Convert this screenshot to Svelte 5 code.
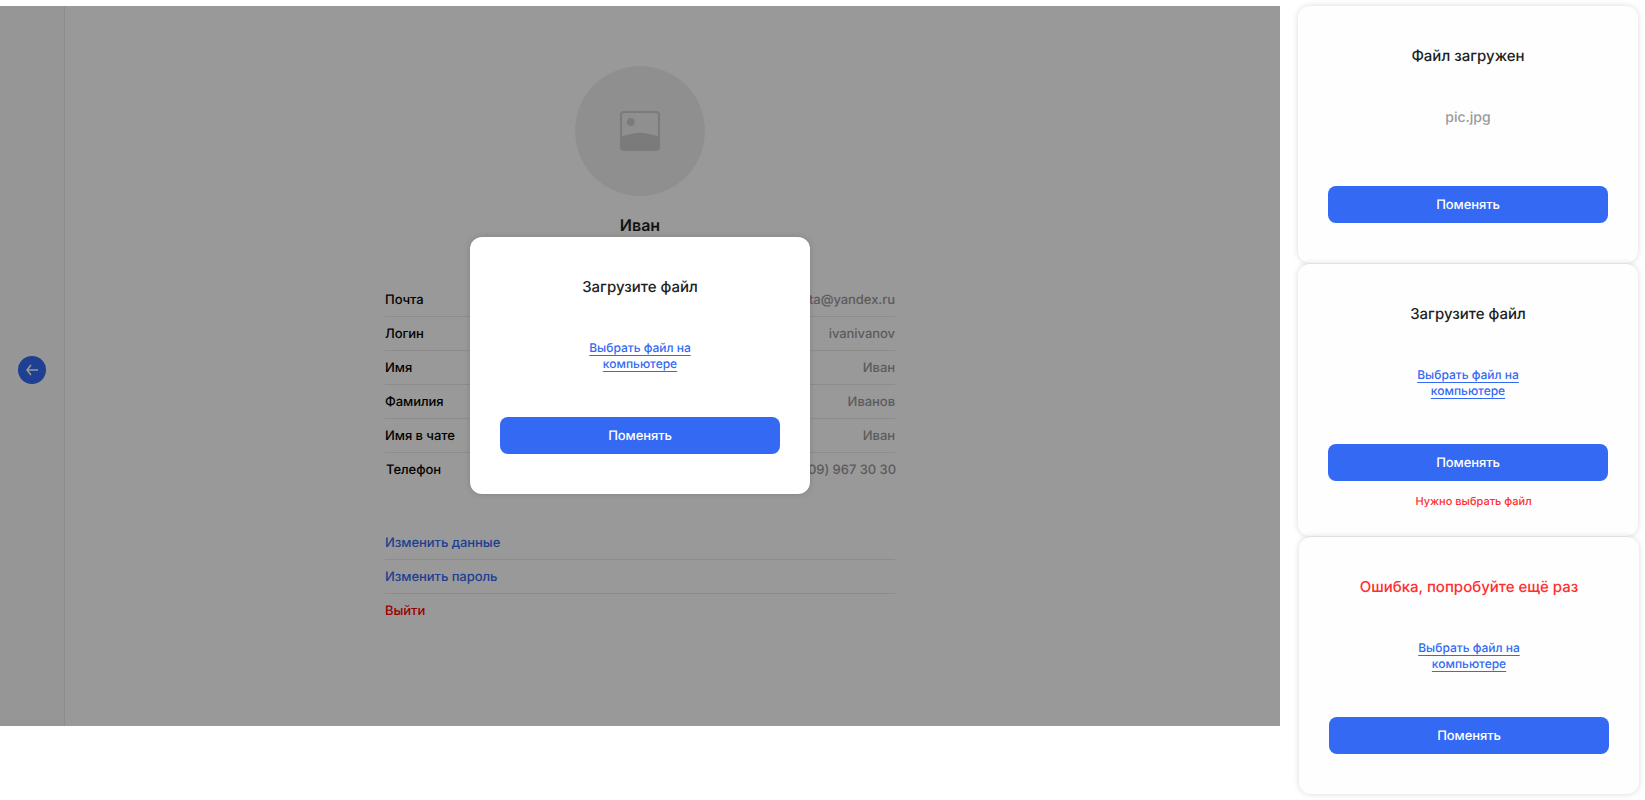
<script>
  const profile = [
    ['Почта', 'pochta@yandex.ru'],
    ['Логин', 'ivanivanov'],
    ['Имя', 'Иван'],
    ['Фамилия', 'Иванов'],
    ['Имя в чате', 'Иван'],
    ['Телефон', '+7 (909) 967 30 30'],
  ];
</script>

{#snippet card(title, opts = {})}
  <section class="card" class:tall={opts.hint} class:shifted={opts.shifted}>
    <h2 class:danger={opts.failed}>{title}</h2>
    <div class="body">
      {#if opts.file}
        <span class="file">{opts.file}</span>
      {:else}
        <a class="pick" href="#file"><span>Выбрать файл на</span><br /><span>компьютере</span></a>
      {/if}
    </div>
    <button class="submit" type="button">Поменять</button>
    {#if opts.hint}<p class="hint">{opts.hint}</p>{/if}
  </section>
{/snippet}

<div class="board">
  <div class="screen">
    <aside>
      <button class="back" type="button" aria-label="Назад">
        <svg width="28" height="28" viewBox="0 0 28 28">
          <path d="M20 14H9M13 9L9 14l4 5" fill="none" stroke="#fff" stroke-width="1.6" />
        </svg>
      </button>
    </aside>
    <main>
      <div class="avatar">
        <svg width="40" height="40" viewBox="0 0 40 40">
          <path
            fill="#cdcdcd"
            fill-rule="evenodd"
            d="M4 0h32a4 4 0 0 1 4 4v32a4 4 0 0 1-4 4H4a4 4 0 0 1-4-4V4a4 4 0 0 1 4-4zM4 2a2 2 0 0 0-2 2v21.200l11-2.700a30 30 0 0 1 14 0L38 25.200V4a2 2 0 0 0-2-2z"
          />
          <circle cx="10.800" cy="11" r="3.900" fill="#cdcdcd" />
        </svg>
      </div>
      <h1>Иван</h1>
      <dl>
        {#each profile as [label, value]}
          <div class="row"><dt>{label}</dt><dd>{value}</dd></div>
        {/each}
      </dl>
      <nav>
        <a class="row" href="#data">Изменить данные</a>
        <a class="row" href="#password">Изменить пароль</a>
        <a class="row exit" href="#exit">Выйти</a>
      </nav>
    </main>
    <div class="overlay">{@render card('Загрузите файл')}</div>
  </div>
  <div class="states">
    {@render card('Файл загружен', { file: 'pic.jpg' })}
    {@render card('Загрузите файл', { hint: 'Нужно выбрать файл' })}
    {@render card('Ошибка, попробуйте ещё раз', { failed: true, shifted: true })}
  </div>
</div>

<style>
  :global(body) {
    background: #fff;
  }
  .board {
    display: flex;
    align-items: flex-start;
    gap: 18px;
    box-sizing: border-box;
    width: 1645px;
    height: 800px;
    padding-top: 6px;
    overflow: hidden;
    font-family: Inter, 'Liberation Sans', sans-serif;
    font-weight: 500;
    text-rendering: geometricPrecision;
    color: #1e1e1e;
  }
  h1, h2, p, dl, dd { margin: 0; }
  button {
    border: 0;
    padding: 0;
    font: inherit;
    text-rendering: inherit;
  }
  .screen {
    position: relative;
    display: flex;
    flex: none;
    width: 1280px;
    height: 720px;
  }
  aside {
    display: flex;
    align-items: center;
    justify-content: center;
    width: 64px;
    height: 712px;
    padding-top: 8px;
    background: #fbfbfb;
    border-right: 1px solid #eaeaea;
  }
  .back {
    width: 28px;
    height: 28px;
    border-radius: 50%;
    background: #3369f3;
  }
  .back svg { display: block; }
  main {
    display: flex;
    flex-direction: column;
    align-items: center;
    flex: 1;
    padding: 60px 65px 0 0;
  }
  .avatar {
    display: flex;
    align-items: center;
    justify-content: center;
    width: 130px;
    height: 130px;
    border-radius: 50%;
    background: #efefef;
  }
  h1 {
    margin-top: 20px;
    font-size: 16px;
    line-height: 19px;
    font-weight: 600;
  }
  dl {
    width: 510px;
    margin-top: 48px;
  }
  .row {
    display: flex;
    justify-content: space-between;
    box-sizing: border-box;
    height: 34px;
    font-size: 13px;
    line-height: 35px;
    letter-spacing: -0.05px;
    border-bottom: 1px solid #eaeaea;
  }
  .row:last-child { border-bottom: 0; }
  dl .row:last-child { margin: 0 -1px 0 1px; }
  dt { color: #000; }
  dd { color: #999; }
  nav {
    width: 510px;
    margin-top: 39px;
  }
  nav .row {
    color: #3369f3;
    text-decoration: none;
  }
  nav .exit { color: #f00; }
  .overlay {
    position: absolute;
    inset: 0;
    display: flex;
    align-items: flex-start;
    justify-content: center;
    padding-top: 231px;
    background: rgba(0, 0, 0, 0.4);
  }
  .states {
    display: flex;
    flex-direction: column;
    gap: 1px;
  }
  .card {
    display: flex;
    flex-direction: column;
    box-sizing: border-box;
    width: 340px;
    height: 257px;
    padding: 40px 30px 0;
    border-radius: 12px;
    background: #fefefe;
    box-shadow: 0 0 6px rgba(0, 0, 0, 0.15);
    text-align: center;
  }
  .overlay .card { background: #fff; }
  .card.tall { height: 272px; }
  .card.shifted { margin-left: 1px; }
  h2 {
    font-size: 15px;
    line-height: 20px;
    font-weight: inherit;
  }
  .danger { color: #ff2f2f; }
  .body {
    height: 79px;
    padding-top: 41px;
  }
  .file {
    display: block;
    padding-top: 1px;
    font-size: 14px;
    line-height: 20px;
    color: #999;
  }
  .pick {
    display: block;
    margin-top: 2px;
    font-size: 12px;
    line-height: 16px;
    color: #3369f3;
    text-decoration: underline;
    text-underline-offset: 3px;
    text-decoration-thickness: 1px;
    text-decoration-skip-ink: none;
  }
  .submit {
    height: 37px;
    flex: none;
    padding-top: 1px;
    border-radius: 8px;
    background: #3369f3;
    color: #fff;
    font-size: 13px;
    letter-spacing: -0.08px;
  }
  .hint {
    margin: 13px 0 0 11px;
    font-size: 11px;
    line-height: 14px;
    color: #ff2f2f;
  }
</style>
